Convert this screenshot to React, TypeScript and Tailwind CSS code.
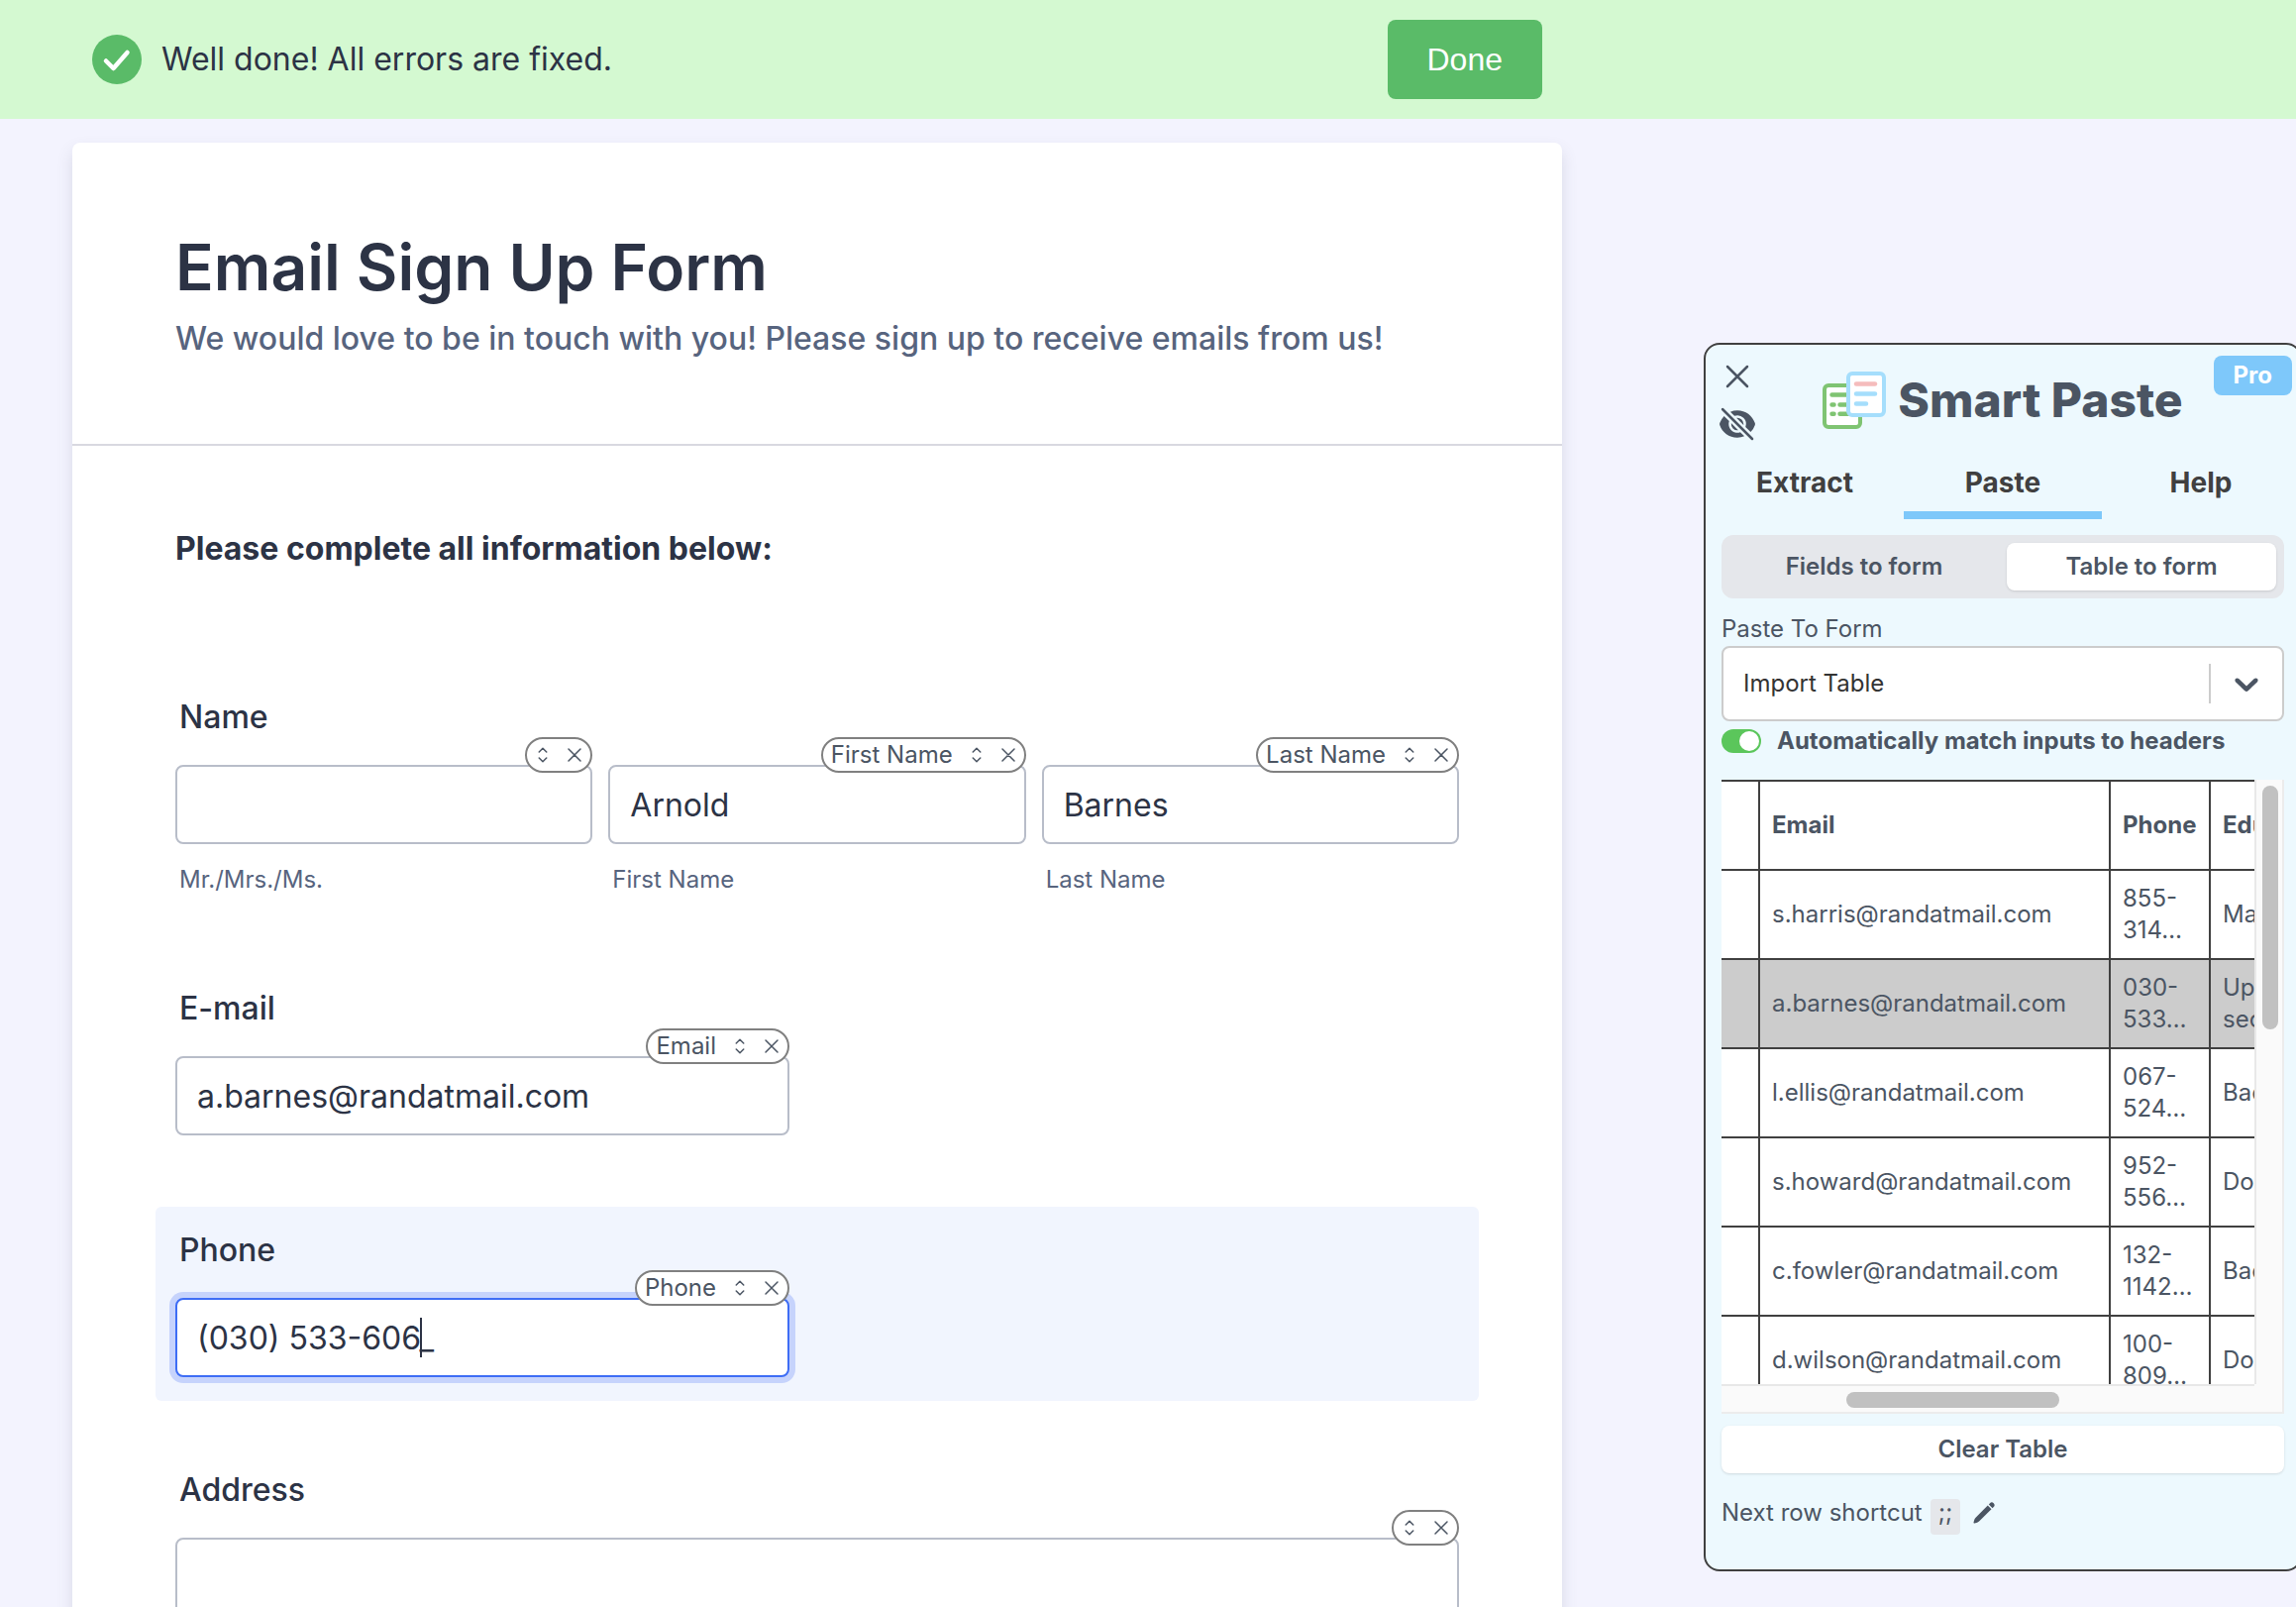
import { HiEyeSlash, HiOutlineChevronUpDown, HiOutlineXMark, HiPencil } from 'react-icons/hi2';

const rows = [
  { email: 's.harris@randatmail.com', phone: '855-314…', education: "Master's" },
  { email: 'a.barnes@randatmail.com', phone: '030-533…', education: 'Upper secondary', active: true },
  { email: 'l.ellis@randatmail.com', phone: '067-524…', education: 'Bachelor' },
  { email: 's.howard@randatmail.com', phone: '952-556…', education: 'Doctorate' },
  { email: 'c.fowler@randatmail.com', phone: '132-1142…', education: 'Bachelor' },
  { email: 'd.wilson@randatmail.com', phone: '100-809…', education: 'Doctorate' },
];

const tabs = ['Extract', 'Paste', 'Help'];

function HeaderPill({ name = '' }: { name?: string }) {
  return (
    <div className="absolute -top-7 right-0 flex h-9 items-center rounded-full border-2 border-[#808080] bg-white px-1 text-2xl text-[#4b5563]">
      {name && <span className="mr-3 pl-1">{name}</span>}
      <button type="button" aria-label="Change header" className="mr-2">
        <HiOutlineChevronUpDown className="size-6" />
      </button>
      <button type="button" aria-label="Remove header">
        <HiOutlineXMark className="size-6" />
      </button>
    </div>
  );
}

type FieldProps = {
  id: string;
  label: string;
  value?: string;
  header?: string;
  focused?: boolean;
};

function TextField({ id, label, value = '', header, focused }: FieldProps) {
  return (
    <div className="relative">
      <input
        id={id}
        aria-label={label}
        defaultValue={value}
        className={
          focused
            ? 'block h-20 w-full rounded-lg border-2 border-[#3e6df5] bg-white px-5 text-[32px] text-[#2c3345] ring-6 ring-[#c6d3fc] outline-none'
            : 'block h-20 w-full rounded-lg border-2 border-[#b8bdc9] bg-white px-5 text-[32px] text-[#2c3345] outline-none'
        }
      />
      {focused && <span className="absolute top-5 left-[247px] h-10 w-0.5 bg-[#2c3345]" />}
      <HeaderPill name={header} />
    </div>
  );
}

function NamePart({ id, label, value, header }: FieldProps) {
  return (
    <div>
      <TextField id={id} label={label} value={value} header={header} />
      <label htmlFor={id} className="mt-5 block pl-1 text-2xl text-[#57647e]">
        {label}
      </label>
    </div>
  );
}

function Banner() {
  return (
    <header className="bg-[#d4f9d1] px-[73px]">
      <div className="flex h-30 max-w-[1504px] items-center px-5">
        <svg viewBox="0 0 50 50" className="size-[50px]" fill="none">
          <circle cx="25" cy="25" r="25" fill="#5abb68" />
          <path d="M14 26.5l7.5 7.5L35.5 18" stroke="#fff" strokeWidth="4.5" strokeLinecap="round" strokeLinejoin="round" />
        </svg>
        <p className="ml-5 text-[32px] text-[#2c3345]">Well done! All errors are fixed.</p>
        <button
          type="button"
          className="ml-auto h-20 rounded-lg bg-[#5abb68] px-10 font-['Liberation_Sans',sans-serif] text-[32px] text-white"
        >
          Done
        </button>
      </div>
    </header>
  );
}

function SignUpForm() {
  return (
    <form className="mt-6 max-w-[1504px] flex-1 rounded-lg bg-white text-[#2c3345] shadow-[0_8px_16px_rgba(84,95,111,0.16)]">
      <div className="border-b-2 border-[#d8d8e0] px-26 py-20">
        <h1 className="text-[64px] leading-[92px] font-semibold">Email Sign Up Form</h1>
        <p className="text-[32px] leading-13 font-medium text-[#57647e]">
          We would love to be in touch with you! Please sign up to receive emails from us!
        </p>
      </div>

      <div className="px-26 pt-21">
        <h2 className="text-[32px] leading-10 font-bold">Please complete all information below:</h2>

        {/* Name */}
        <fieldset className="mt-[130px]">
          <legend className="pl-1 text-[32px] leading-10 font-medium">Name</legend>
          <div className="mt-7 grid grid-cols-3 gap-4">
            <NamePart id="prefix" label="Mr./Mrs./Ms." />
            <NamePart id="first" label="First Name" value="Arnold" header="First Name" />
            <NamePart id="last" label="Last Name" value="Barnes" header="Last Name" />
          </div>
        </fieldset>

        {/* E-mail */}
        <div className="mt-[94px]">
          <label htmlFor="email" className="block pl-1 text-[32px] leading-10 font-medium">
            E-mail
          </label>
          <div className="mt-7 max-w-[620px]">
            <TextField id="email" label="E-mail" value="a.barnes@randatmail.com" header="Email" />
          </div>
        </div>

        {/* Phone */}
        <div className="-mx-5 mt-18 rounded-md bg-[#f1f5fe] px-5 py-6">
          <label htmlFor="phone" className="block pl-1 text-[32px] leading-10 font-medium">
            Phone
          </label>
          <div className="mt-7 max-w-[620px]">
            <TextField id="phone" label="Phone" value="(030) 533-606_" header="Phone" focused />
          </div>
        </div>

        {/* Address */}
        <div className="mt-[70px] pb-20">
          <label htmlFor="address" className="block pl-1 text-[32px] leading-10 font-medium">
            Address
          </label>
          <div className="mt-7">
            <TextField id="address" label="Address" />
          </div>
        </div>
      </div>
    </form>
  );
}

function Logo() {
  return (
    <svg viewBox="0 0 64 58" className="h-[58px] w-16" fill="none" strokeLinecap="round">
      <rect x="2" y="14" width="36" height="42" rx="4" fill="#fff" stroke="#7fc472" strokeWidth="4" />
      <path d="M9.5 23.5H24M9.5 33.5h2M17.5 33.5H26M9.5 42.8h2M17.5 42.8H26" stroke="#7fc472" strokeWidth="4.5" />
      <rect x="26" y="2" width="36" height="42" rx="4" fill="#fff" stroke="#a5defc" strokeWidth="4" />
      <path d="M34 12.5h19" stroke="#f5bcbc" strokeWidth="4.5" />
      <path d="M34 22.5h19M34 32.5h10" stroke="#a5defc" strokeWidth="4.5" />
    </svg>
  );
}

function DataTable() {
  return (
    <div className="mt-[23px] border-r-2 border-b-2 border-[#ececec] bg-[#fafafa]">
      <div className="flex">
        <div className="h-[610px] flex-1 overflow-hidden bg-white">
          <table className="w-[620px] table-fixed border-collapse text-left text-2xl">
            <colgroup>
              <col className="w-[38px]" />
              <col className="w-[354px]" />
              <col className="w-[101px]" />
              <col />
            </colgroup>
            <thead>
              <tr className="h-[90px] border-y-2 border-[#404040]">
                <th className="border-r-2 border-[#404040]" />
                <th className="border-r-2 border-[#404040] px-3 font-bold">Email</th>
                <th className="border-r-2 border-[#404040] px-3 font-bold">Phone</th>
                <th className="px-3 font-bold">Education</th>
              </tr>
            </thead>
            <tbody>
              {rows.map((row) => (
                <tr key={row.email} className={row.active ? 'h-[90px] border-b-2 border-[#404040] bg-[#ccc]' : 'h-[90px] border-b-2 border-[#404040]'}>
                  <td className="border-r-2 border-[#404040]" />
                  <td className="border-r-2 border-[#404040] px-3">{row.email}</td>
                  <td className="border-r-2 border-[#404040] px-3">{row.phone}</td>
                  <td className="px-3">{row.education}</td>
                </tr>
              ))}
            </tbody>
          </table>
        </div>
        <div className="w-7 border-l-2 border-[#e8e8e8] px-1.5 pt-1.5">
          <div className="h-[246px] w-4 rounded-full bg-[#c1c1c1]" />
        </div>
      </div>
      <div className="mr-7 border-t-2 border-[#e8e8e8] pt-1.5 pb-1">
        <div className="ml-[126px] h-4 w-[215px] rounded-full bg-[#c1c1c1]" />
      </div>
    </div>
  );
}

function SmartPaste() {
  return (
    <aside className="relative mt-[226px] -mr-1.5 ml-auto w-[604px] shrink-0 self-start rounded-2xl border-2 border-[#404040] bg-[#edf9fe] px-4 pb-[35px] text-[#4b5563]">
      <div className="absolute top-3 left-3 flex flex-col gap-2">
        <button type="button" aria-label="Close">
          <HiOutlineXMark className="size-10" />
        </button>
        <button type="button" aria-label="Hide">
          <HiEyeSlash className="size-10" />
        </button>
      </div>
      <span className="absolute top-[11px] right-2 flex h-10 items-center rounded-lg bg-[#7ec8fa] px-5 text-2xl font-bold text-white">Pro</span>

      <div className="flex items-center justify-center gap-3 pt-5">
        <Logo />
        <h2 className="text-5xl leading-[72px] font-extrabold">Smart Paste</h2>
      </div>

      <nav className="-mx-4 mt-3 grid grid-cols-3">
        {tabs.map((tab) => (
          <button
            key={tab}
            type="button"
            className={
              tab === 'Paste'
                ? 'h-[72px] border-b-8 border-[#7ec8fa] pt-1.5 text-[28px] font-bold text-[#404040]'
                : 'h-[72px] border-b-8 border-transparent pt-1.5 text-[28px] font-bold text-[#404040]'
            }
          >
            {tab}
          </button>
        ))}
      </nav>

      <div className="mt-4 grid grid-cols-2 gap-2 rounded-xl bg-gray-200 p-2 text-2xl font-semibold">
        <button type="button" className="h-12 rounded-lg">
          Fields to form
        </button>
        <button type="button" className="h-12 rounded-lg bg-white shadow">
          Table to form
        </button>
      </div>

      <label htmlFor="paste-to" className="mt-[15px] block text-2xl">
        Paste To Form
      </label>
      <div className="relative mt-px">
        <select
          id="paste-to"
          className="block h-[76px] w-full appearance-none rounded-lg border-2 border-[#ccc] bg-white pr-20 pl-5 text-2xl text-[#333] outline-none"
        >
          <option>Import Table</option>
        </select>
        <div className="pointer-events-none absolute inset-y-0 right-[18px] flex items-center gap-4">
          <span className="h-10 w-0.5 bg-[#ccc]" />
          <svg viewBox="0 0 20 20" className="size-10" fill="currentColor">
            <path d="M4.516 7.548c0.436-0.446 1.043-0.481 1.576 0l3.908 3.747 3.908-3.747c0.533-0.481 1.141-0.446 1.574 0 0.436 0.445 0.408 1.197 0 1.615-0.406 0.418-4.695 4.502-4.695 4.502-0.217 0.223-0.502 0.335-0.787 0.335s-0.57-0.112-0.789-0.335c0 0-4.287-4.084-4.695-4.502s-0.436-1.17 0-1.615z" />
          </svg>
        </div>
      </div>

      <label className="mt-1 flex items-center gap-4 text-2xl font-bold">
        <input type="checkbox" defaultChecked className="peer sr-only" />
        <span className="flex h-6 w-10 items-center justify-end rounded-full bg-[#5bc65b] px-0.5">
          <span className="size-5 rounded-full bg-white" />
        </span>
        Automatically match inputs to headers
      </label>

      <DataTable />

      <button type="button" className="mt-3 h-12 w-full rounded-lg bg-white text-2xl font-semibold shadow">
        Clear Table
      </button>

      <div className="mt-6 flex items-start text-2xl">
        <span>Next row shortcut</span>
        <kbd className="mt-0.5 ml-2 h-9 rounded bg-gray-200 px-2 font-[Inter,sans-serif] leading-7">;;</kbd>
        <button type="button" aria-label="Edit shortcut" className="mt-1 ml-3">
          <HiPencil className="size-6" />
        </button>
      </div>
    </aside>
  );
}

export default function App() {
  return (
    <div className="flex h-screen flex-col overflow-hidden bg-[#f3f3fe] font-[Inter,sans-serif]">
      <Banner />
      <main className="flex flex-1 pl-[73px]">
        <SignUpForm />
        <SmartPaste />
      </main>
    </div>
  );
}
